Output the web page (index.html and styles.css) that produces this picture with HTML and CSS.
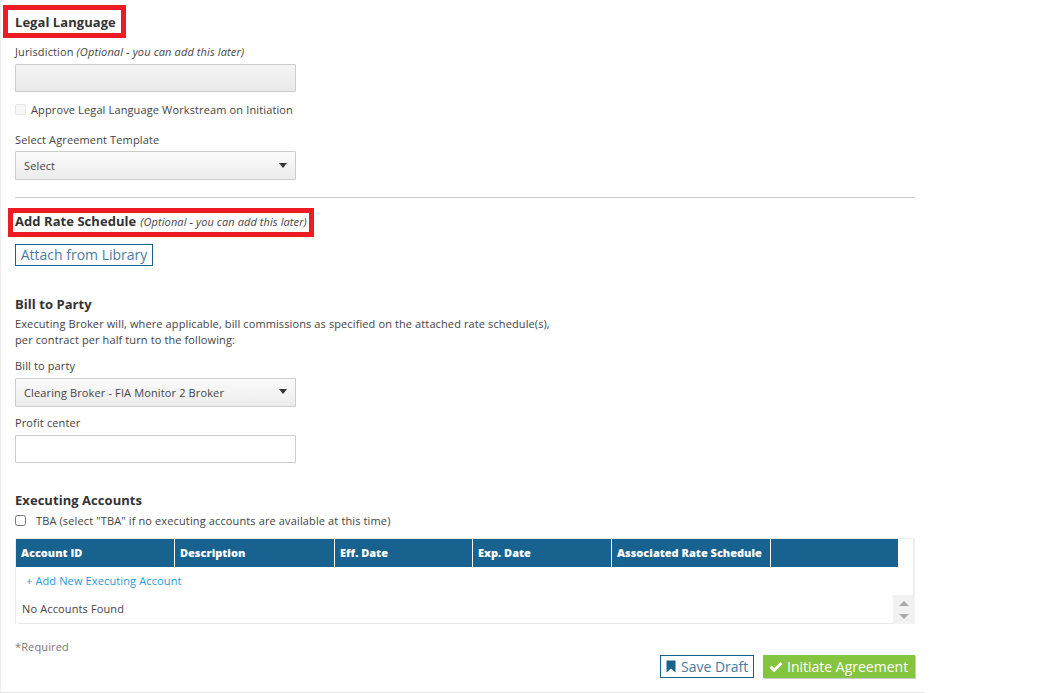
FILE: index.html
```html
<!DOCTYPE html>
<html lang="en">
<head>
    <meta charset="UTF-8">
    <meta name="viewport" content="width=device-width, initial-scale=1.0">
    <title>Legal Language</title>
    <link rel="stylesheet" href="styles.css">
</head>
<body>
    <div class="panel">
        <section class="legal">
            <div class="mark mark-legal">
                <h3>Legal Language</h3>
            </div>

            <label class="field-label label-jurisdiction">Jurisdiction <em>(Optional - you can add this later)</em></label>
            <input type="text" class="text-input disabled" disabled>

            <div class="approve">
                <span class="check-off"></span>
                <span>Approve Legal Language Workstream on Initiation</span>
            </div>

            <label class="field-label label-template">Select Agreement Template</label>
            <div class="select">
                <span>Select</span>
                <i class="caret"></i>
            </div>
        </section>

        <hr class="divider">

        <section class="rates">
            <div class="mark mark-rates">
                <h3>Add Rate Schedule</h3>
                <em>(Optional - you can add this later)</em>
            </div>
            <div>
                <button class="outline-btn attach">Attach from Library</button>
            </div>
        </section>

        <section class="bill">
            <h3>Bill to Party</h3>
            <p>Executing Broker will, where applicable, bill commissions as specified on the attached rate schedule(s),<br>per contract per half turn to the following:</p>

            <label class="field-label label-bill">Bill to party</label>
            <div class="select">
                <span>Clearing Broker - FIA Monitor 2 Broker</span>
                <i class="caret"></i>
            </div>

            <label class="field-label label-profit">Profit center</label>
            <input type="text" class="text-input">
        </section>

        <section class="accounts">
            <h3>Executing Accounts</h3>
            <div class="tba">
                <input type="checkbox">
                <span>TBA (select "TBA" if no executing accounts are available at this time)</span>
            </div>

            <div class="table-box">
                <div class="table-head">
                    <div class="th col-id">Account ID</div>
                    <div class="th col-desc">Description</div>
                    <div class="th col-eff">Eff. Date</div>
                    <div class="th col-exp">Exp. Date</div>
                    <div class="th col-rate">Associated Rate Schedule</div>
                    <div class="th col-end"></div>
                </div>
                <div class="table-body">
                    <a class="add-link" href="#">+ Add New Executing Account</a>
                    <div class="no-rows">No Accounts Found</div>
                </div>
                <div class="scroller">
                    <i class="arrow-up"></i>
                    <i class="arrow-down"></i>
                </div>
            </div>
        </section>

        <p class="required">*Required</p>

        <div class="actions">
            <button class="outline-btn save">
                <svg width="11" height="13" viewBox="0 0 11 13"><path d="M0.5 0.5h9v12L5 8.6 0.5 12.5z" fill="#17628f"/></svg>
                Save Draft
            </button>
            <button class="green-btn">
                <svg width="14" height="11" viewBox="0 0 14 11"><path d="M1.6 5.6 5.2 9.2 12.4 2" fill="none" stroke="#fff" stroke-width="3"/></svg>
                Initiate Agreement
            </button>
        </div>
    </div>
</body>
</html>
```

FILE: styles.css
```css
*{
    margin:0;
    padding:0;
    box-sizing:border-box;
    font-family:"Open Sans", sans-serif;
}
body{
    background:#fff;
    color:#444;
    font-size:11px;
    letter-spacing:.13px;
}
.panel{
    width:925px;
    height:693px;
    padding:5px 10px 0 14px;
    border-left:1px solid #eee;
    border-bottom:1px solid #e8e8e8;
    overflow:hidden;
}
h3{
    font-size:13px;
    line-height:18px;
    font-weight:700;
    color:#333;
    letter-spacing:.05px;
}
em{
    font-style:italic;
}
.mark{
    border:5px solid #ed1c24;
    background:#fff;
}
.mark-legal{
    width:123px;
    height:33px;
    margin-left:-12px;
    padding:3px 0 0 7px;
}
.mark-rates{
    width:306px;
    height:29px;
    margin-top:10px;
    margin-left:-7px;
    padding:0 0 4px 2px;
    display:flex;
    align-items:center;
    gap:4px;
    white-space:nowrap;
}
.mark-rates em{
    padding-top:2px;
    letter-spacing:.1px;
}
.field-label{
    display:block;
    line-height:15px;
}
.label-jurisdiction{
    margin-top:6px;
}
.text-input{
    display:block;
    width:281px;
    height:28px;
    margin-top:5px;
    border:1px solid #ccc;
    background:#fff;
    border-radius:1px;
}
.text-input.disabled{
    background:linear-gradient(#f4f4f4,#e9e9e9);
}
.approve{
    display:flex;
    align-items:center;
    gap:5px;
    margin-top:9px;
    height:16px;
}
.check-off{
    width:11px;
    height:11px;
    border:1px solid #e6e6e6;
    border-radius:2px;
    background:#f8f8f8;
}
.label-template{
    margin-top:15px;
}
.select{
    display:flex;
    justify-content:space-between;
    align-items:center;
    width:281px;
    height:29px;
    margin-top:4px;
    padding:0 8px 0 8px;
    border:1px solid #ccc;
    border-radius:1px;
    background:linear-gradient(#fbfbfb,#ececec);
    color:#444;
}
.caret{
    width:0;
    height:0;
    border-left:4px solid transparent;
    border-right:4px solid transparent;
    border-top:5px solid #333;
}
.divider{
    border:0;
    border-top:1px solid #ccc;
    width:900px;
    margin-top:17px;
}
.outline-btn{
    background:#fff;
    border:1px solid #17628f;
    color:#4a7ba0;
    font-size:14px;
    line-height:20px;
}
.attach{
    display:block;
    width:138px;
    height:22px;
    margin-top:7px;
}
.bill{
    margin-top:29px;
}
.bill p{
    margin-top:3px;
    line-height:16px;
    letter-spacing:.11px;
}
.label-bill{
    margin-top:10px;
}
.bill .select{
    margin-top:5px;
}
.bill .caret{
    margin-top:-3px;
}
.label-profit{
    margin-top:8px;
}
.bill .text-input{
    margin-top:5px;
}
.accounts{
    margin-top:28px;
}
.tba{
    display:flex;
    align-items:center;
    gap:10px;
    height:18px;
    margin-top:2px;
}
.tba input{
    width:11px;
    height:11px;
    margin:0;
}
.table-box{
    position:relative;
    width:900px;
    height:86px;
    margin-top:9px;
    border-top:1px solid #eee;
    border-left:1px solid #eee;
    border-right:2px solid #eee;
}
.table-head{
    display:flex;
    width:882px;
    height:28px;
    background:#17628f;
}
.th{
    padding:0 5px;
    color:#fff;
    font-weight:800;
    line-height:28px;
    white-space:nowrap;
    border-right:1px solid #fff;
    letter-spacing:0;
}
.col-id{ width:159px; }
.col-desc{ width:160px; }
.col-eff{ width:138px; }
.col-exp{ width:139px; }
.col-rate{ width:159px; }
.col-end{ width:127px; border-right:0; }
.table-body{
    height:57px;
    margin-left:2px;
    margin-right:18px;
    border-bottom:1px solid #e8e8e8;
}
.add-link{
    display:block;
    padding:6px 0 0 8px;
    line-height:15px;
    color:#1e9bdc;
    text-decoration:none;
}
.no-rows{
    margin-top:13px;
    padding-left:4px;
    line-height:15px;
}
.scroller{
    position:absolute;
    right:-2px;
    bottom:0;
    width:22px;
    height:29px;
    background:#f1f1f1;
}
.arrow-up,.arrow-down{
    position:absolute;
    left:6px;
    width:0;
    height:0;
    border-left:5px solid transparent;
    border-right:5px solid transparent;
}
.arrow-up{
    top:6px;
    border-bottom:5px solid #aaa;
}
.arrow-down{
    top:19px;
    border-top:5px solid #aaa;
}
.required{
    margin-top:15px;
    line-height:15px;
    color:#777;
}
.actions{
    display:flex;
    justify-content:flex-end;
    gap:9px;
    width:900px;
    margin-top:1px;
}
.save{
    display:flex;
    align-items:center;
    gap:4px;
    height:23px;
    width:94px;
    padding-left:5px;
}
.green-btn{
    display:flex;
    align-items:center;
    gap:4px;
    width:152px;
    height:23px;
    padding-left:6px;
    border:0;
    background:#85c43f;
    color:#fff;
    font-size:14px;
    box-shadow:1px 1px 0 #ccc;
}
```
